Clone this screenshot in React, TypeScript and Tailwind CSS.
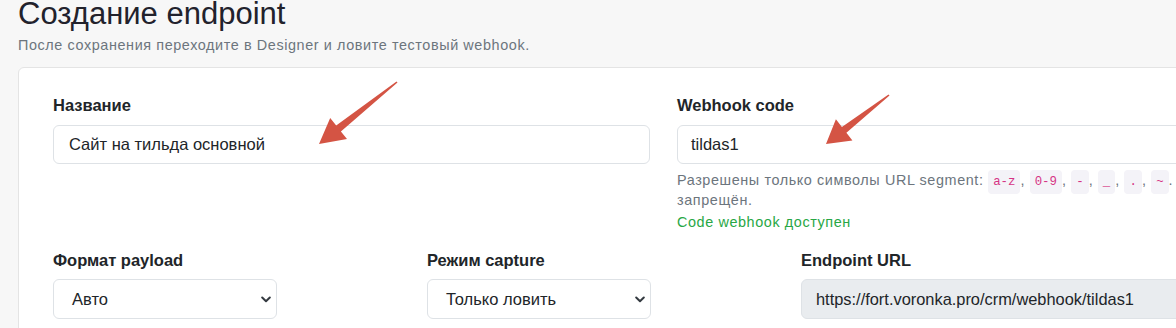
import React from "react";

function arrowPoints(tx: number, ty: number, px: number, py: number, H: number, W: number, w0: number, w1: number) {
  const dx = px - tx;
  const dy = py - ty;
  const len = Math.hypot(dx, dy);
  const ux = dx / len;
  const uy = dy / len;
  const nx = -uy;
  const ny = ux;
  const bx = px - ux * H;
  const by = py - uy * H;
  const pts: [number, number][] = [
    [tx + nx * w0, ty + ny * w0],
    [bx + nx * w1, by + ny * w1],
    [bx + nx * W, by + ny * W],
    [px, py],
    [bx - nx * W, by - ny * W],
    [bx - nx * w1, by - ny * w1],
    [tx - nx * w0, ty - ny * w0],
  ];
  return pts.map((p) => `${p[0].toFixed(1)},${p[1].toFixed(1)}`).join(" ");
}

function Chevron() {
  return (
    <svg width="10" height="7" viewBox="0 0 10 7" fill="none">
      <path d="M1.2 1.5 L5 5.2 L8.8 1.5" stroke="#343a40" strokeWidth="2" strokeLinecap="round" strokeLinejoin="round" />
    </svg>
  );
}

function Code({ children }: { children: React.ReactNode }) {
  return (
    <code className="font-['Liberation_Mono',monospace] tracking-normal text-[12.4px] text-[#d63384] bg-[#f4f3f8] rounded-[4px] px-[5px] py-[5px]">
      {children}
    </code>
  );
}

export default function App() {
  return (
    <div className="relative w-[1176px] h-[328px] overflow-hidden bg-[#f7f7f7] font-['Liberation_Sans',Arial,sans-serif] text-[#212529]">
      <div className="pl-[18px]">
        <h1 className="text-[31px] leading-[32px] -mt-[2px] text-[#22222c] whitespace-nowrap">Создание endpoint</h1>
        <p className="mt-[5px] text-[14.4px] tracking-[0.6px] leading-[20px] text-[#6c757d] whitespace-nowrap">
          После сохранения переходите в Designer и ловите тестовый webhook.
        </p>
        <div className="mt-[12px] w-[1400px] h-[400px] bg-white border border-[#e4e4e4] rounded-[6px] pl-[34px] pt-[25px]">
          <div className="grid grid-cols-[597px_600px] gap-x-[27px]">
            <div>
              <div className="text-[16.5px] leading-[24px] font-bold mb-[8px]">Название</div>
              <div className="h-[39px] border border-[#dee2e6] rounded-[6px] pl-[15px] flex items-center text-[16.5px]">
                Сайт на тильда основной
              </div>
            </div>
            <div>
              <div className="text-[16.5px] leading-[24px] font-bold mb-[8px]">Webhook code</div>
              <div className="h-[39px] border border-[#dee2e6] rounded-[6px] pl-[13px] flex items-center text-[16.5px]">
                tildas1
              </div>
              <div className="mt-[7px] text-[14.4px] tracking-[0.6px] leading-[18px] text-[#6c757d] whitespace-nowrap">
                Разрешены только символы URL segment: <Code>a-z</Code>, <Code>0-9</Code>, <Code>-</Code>,{" "}
                <Code>_</Code>, <Code>.</Code>, <Code>~</Code>. Слэш / запрещён
                <br />
                запрещён.
              </div>
              <div className="mt-[4px] text-[14.4px] tracking-[0.6px] leading-[18px] text-[#28a745]">Code webhook доступен</div>
            </div>
          </div>
          <div className="mt-[17px] grid grid-cols-[374px_374px_600px]">
            <div>
              <div className="text-[16.5px] leading-[24px] font-bold mb-[7px]">Формат payload</div>
              <div className="w-[224px] h-[40px] border border-[#dee2e6] rounded-[6px] pl-[18px] pr-[5px] flex items-center justify-between text-[16.5px]">
                <span>Авто</span>
                <Chevron />
              </div>
            </div>
            <div>
              <div className="text-[16.5px] leading-[24px] font-bold mb-[7px]">Режим capture</div>
              <div className="w-[224px] h-[40px] border border-[#dee2e6] rounded-[6px] pl-[18px] pr-[5px] flex items-center justify-between text-[16.5px]">
                <span>Только ловить</span>
                <Chevron />
              </div>
            </div>
            <div>
              <div className="text-[16.5px] leading-[24px] font-bold mb-[7px]">Endpoint URL</div>
              <div className="h-[40px] border border-[#dee2e6] bg-[#e9ecef] rounded-[6px] pl-[14px] flex items-center text-[16.4px]">
                https://fort.voronka.pro/crm/webhook/tildas1
              </div>
            </div>
          </div>
        </div>
      </div>
      <svg className="absolute left-0 top-0 pointer-events-none" width="1176" height="328">
        <polygon points={arrowPoints(397, 82, 319, 144, 25, 13.5, 0.8, 3.8)} fill="#d45444" />
        <polygon points={arrowPoints(889, 95, 826, 144, 23, 13.5, 0.8, 3.6)} fill="#d45444" />
      </svg>
    </div>
  );
}
